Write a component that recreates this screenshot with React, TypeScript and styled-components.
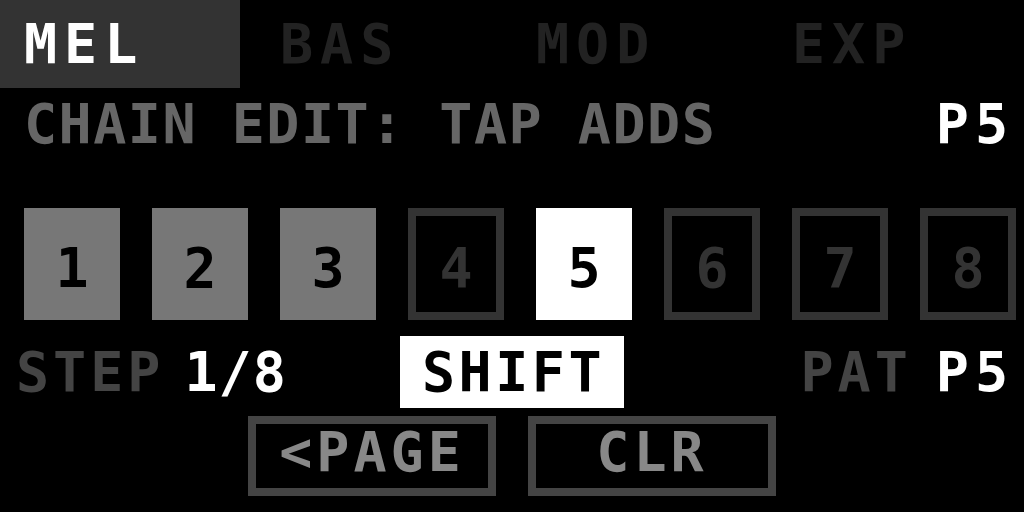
import React from "react";
import styled, { createGlobalStyle } from "styled-components";

const Global = createGlobalStyle`
  html, body { margin: 0; padding: 0; background: #000; }
  #root { width: 1024px; height: 512px; }
`;

const Screen = styled.div`
  width: 1024px;
  height: 512px;
  background: #000;
  overflow: hidden;
  display: flex;
  flex-direction: column;
  font-family: "DejaVu Sans Mono", "Liberation Mono", monospace;
  font-weight: bold;
  font-size: 55px;
  line-height: 40px;
  letter-spacing: 4px;
`;

const TabBar = styled.div`
  display: grid;
  grid-template-columns: repeat(4, 240px);
  column-gap: 16px;
  height: 88px;
`;

const Tab = styled.div<{ $active?: boolean }>`
  box-sizing: border-box;
  height: 88px;
  padding: 24px 0 0 24px;
  background: ${(p) => (p.$active ? "#333" : "transparent")};
  color: ${(p) => (p.$active ? "#fff" : "#222")};
  letter-spacing: 7px;
`;

const HeaderRow = styled.div`
  display: flex;
  justify-content: space-between;
  align-items: flex-start;
  margin-top: 16px;
  padding: 0 16px 0 24px;
  height: 40px;
`;

const Hint = styled.span`
  color: #666;
  letter-spacing: 1.5px;
`;

const Value = styled.span`
  color: #fff;
  letter-spacing: 6px;
  margin-right: -6px;
`;

const StepRow = styled.div`
  display: flex;
  gap: 32px;
  margin-top: 64px;
  padding-left: 24px;
`;

type SlotKind = "chained" | "current" | "empty";

const Slot = styled.div<{ $kind: SlotKind }>`
  box-sizing: border-box;
  width: 96px;
  height: 112px;
  padding-top: ${(p) => (p.$kind === "empty" ? 32 : 40)}px;
  text-align: center;
  letter-spacing: 0;
  background: ${(p) =>
    p.$kind === "chained" ? "#777" : p.$kind === "current" ? "#fff" : "#000"};
  border: ${(p) => (p.$kind === "empty" ? "8px solid #333" : "none")};
  color: ${(p) => (p.$kind === "empty" ? "#333" : "#000")};
`;

const StatusRow = styled.div`
  display: flex;
  align-items: center;
  margin-top: 16px;
  height: 72px;
`;

const StepInfo = styled.div`
  width: 400px;
  padding-left: 16px;
  box-sizing: border-box;
  display: flex;
  gap: 20px;
`;

const Dim = styled.span`
  color: #444;
`;

const Bright = styled.span`
  color: #fff;
  letter-spacing: 1px;
`;

const ShiftBadge = styled.div`
  box-sizing: border-box;
  width: 224px;
  height: 72px;
  padding: 16px 0 0 22px;
  background: #fff;
  color: #000;
  letter-spacing: 3.5px;
`;

const PatInfo = styled.div`
  flex: 1;
  display: flex;
  justify-content: flex-end;
  gap: 24px;
  padding-right: 16px;
`;

const ButtonRow = styled.div`
  display: flex;
  justify-content: center;
  gap: 32px;
  margin-top: 8px;
`;

const SoftButton = styled.div`
  box-sizing: border-box;
  width: 248px;
  height: 80px;
  border: 8px solid #444;
  padding-top: 8px;
  text-align: center;
  color: #888;
`;

const tabs = ["MEL", "BAS", "MOD", "EXP"];
const chain = [1, 2, 3];
const current = 5;

export default function App() {
  return (
    <>
      <Global />
      <Screen>
        <TabBar>
          {tabs.map((t, i) => (
            <Tab key={t} $active={i === 0}>
              {t}
            </Tab>
          ))}
        </TabBar>
        <HeaderRow>
          <Hint>CHAIN EDIT: TAP ADDS</Hint>
          <Value>P5</Value>
        </HeaderRow>
        <StepRow>
          {Array.from({ length: 8 }, (_, i) => i + 1).map((n) => {
            const kind: SlotKind =
              n === current ? "current" : chain.includes(n) ? "chained" : "empty";
            return (
              <Slot key={n} $kind={kind}>
                {n}
              </Slot>
            );
          })}
        </StepRow>
        <StatusRow>
          <StepInfo>
            <Dim>STEP</Dim>
            <Bright>1/8</Bright>
          </StepInfo>
          <ShiftBadge>SHIFT</ShiftBadge>
          <PatInfo>
            <Dim>PAT</Dim>
            <Value>P5</Value>
          </PatInfo>
        </StatusRow>
        <ButtonRow>
          <SoftButton>&lt;PAGE</SoftButton>
          <SoftButton>CLR</SoftButton>
        </ButtonRow>
      </Screen>
    </>
  );
}
